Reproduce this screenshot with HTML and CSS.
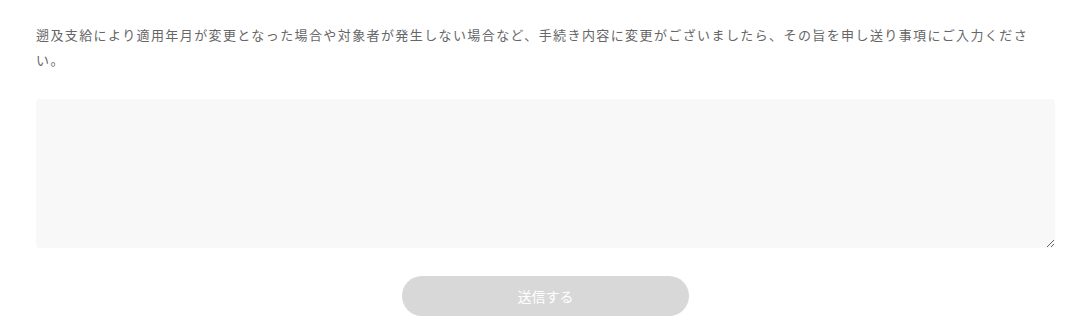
FILE: index.html
```html
<!DOCTYPE html>
<html lang="ja">
<head>
<meta charset="utf-8">
<link rel="stylesheet" href="styles.css">
</head>
<body>
<form class="form">
  <p class="note">遡及支給により適用年月が変更となった場合や対象者が発生しない場合など、手続き内容に変更がございましたら、その旨を申し送り事項にご入力ください。</p>
  <textarea class="field"></textarea>
  <div class="actions">
    <button type="button" class="submit">送信する</button>
  </div>
</form>
</body>
</html>
```

FILE: styles.css
```css
html, body {
  margin: 0;
  padding: 0;
  background: #fff;
}
body {
  font-family: "Noto Sans CJK JP", "Noto Sans", sans-serif;
}
.form {
  display: flex;
  flex-direction: column;
  width: 1019px;
  padding: 22px 0 0 36px;
}
.note {
  margin: 0;
  font-size: 13px;
  line-height: 25px;
  letter-spacing: 1.4px;
  color: #666;
}
.field {
  display: block;
  box-sizing: border-box;
  margin-top: 27px;
  width: 1019px;
  height: 149px;
  border: none;
  border-radius: 4px;
  background: #f8f8f8;
  font-family: inherit;
  font-size: 13px;
  padding: 10px;
  outline: none;
}
.actions {
  display: flex;
  justify-content: center;
  margin-top: 28px;
}
.submit {
  width: 287px;
  height: 40px;
  border: none;
  border-radius: 20px;
  background: #d8d8d8;
  color: #fff;
  font-family: inherit;
  font-size: 14px;
  letter-spacing: 0;
  padding: 0;
}
```
